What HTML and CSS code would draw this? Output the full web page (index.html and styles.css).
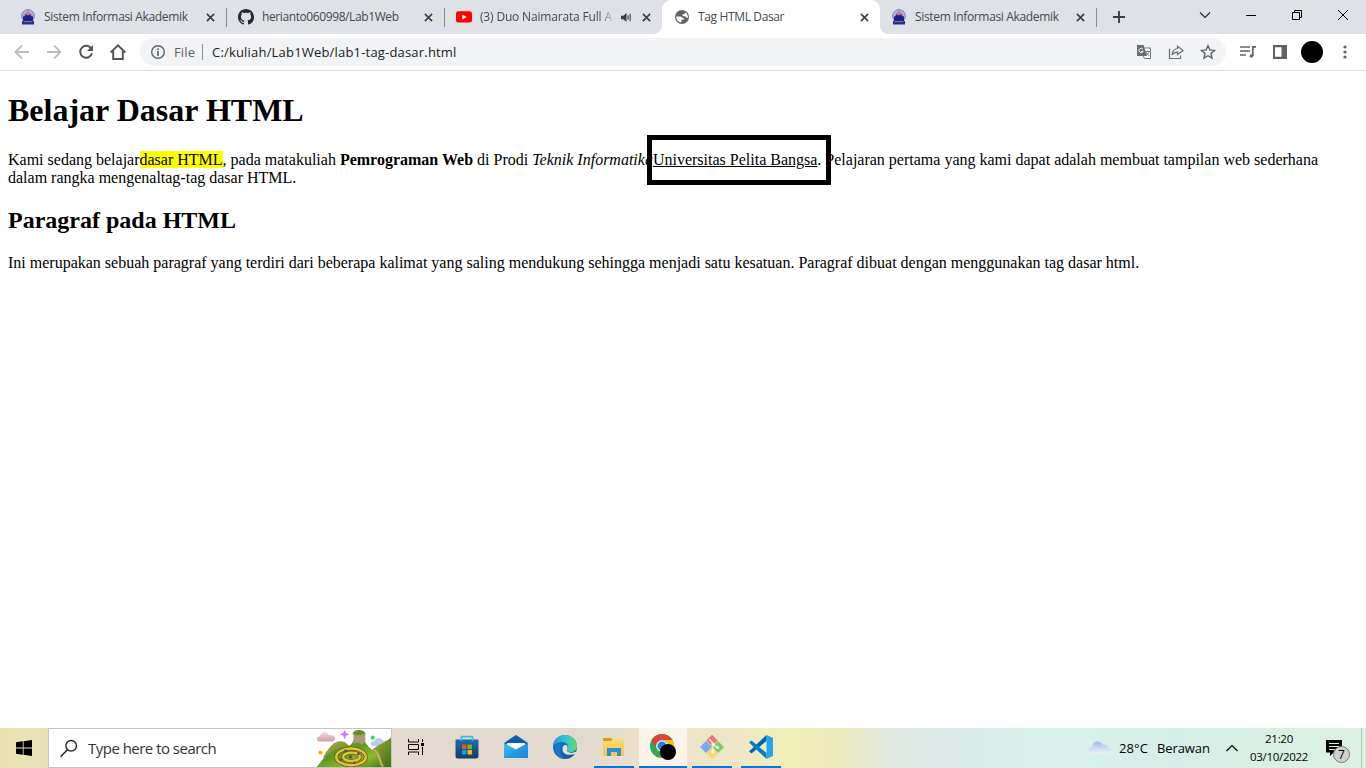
FILE: index.html
```html
<!DOCTYPE html>
<html lang="id">
<head>
<meta charset="utf-8">
<title>Tag HTML Dasar</title>
<link rel="stylesheet" href="styles.css">
</head>
<body>
<svg width="0" height="0" class="defs">
  <defs>
    <symbol id="campus" viewBox="0 0 16 16">
      <circle cx="8" cy="7" r="6.3" fill="#b9bbdf" stroke="#7174b5" stroke-width="1"/>
      <path d="M3.500 5.500 8 1.500l4.500 4v3h-9z" fill="#9497cb"/>
      <path d="M5 5.500h6v4H5z" fill="#30308a"/>
      <path d="M6.7 3.200h2.6v3H6.700z" fill="#ec6b60"/>
      <path d="M3 7.500l5-1 5 1v5H3z" fill="#20217f"/>
      <path d="M2 12h12v3.500H2z" fill="#2e2e84"/>
      <path d="M3.500 12.500h9" stroke="#9697c8" stroke-width=".7"/>
    </symbol>
    <symbol id="close" viewBox="0 0 10 10"><path d="M1 1l8 8M9 1L1 9" stroke="#3c4043" stroke-width="1.8" fill="none"/></symbol>
    <linearGradient id="blueV" x1="0" y1="0" x2="0" y2="1"><stop offset="0" stop-color="#1b6bb0"/><stop offset="1" stop-color="#173a68"/></linearGradient>
    <linearGradient id="mailG" x1="0" y1="0" x2="1" y2="1"><stop offset="0" stop-color="#38c2f5"/><stop offset="1" stop-color="#1687d9"/></linearGradient>
    <linearGradient id="edgeTop" x1="0" y1="0" x2="1" y2="0"><stop offset="0" stop-color="#209be0"/><stop offset=".55" stop-color="#35c6cf"/><stop offset="1" stop-color="#65dc63"/></linearGradient>
    <linearGradient id="edgeLow" x1="0" y1="0" x2="1" y2="1"><stop offset="0" stop-color="#1782d3"/><stop offset="1" stop-color="#0d4e9a"/></linearGradient>
    <linearGradient id="folderG" x1="0" y1="0" x2="0" y2="1"><stop offset="0" stop-color="#ffdc74"/><stop offset="1" stop-color="#f8c44a"/></linearGradient>
    <linearGradient id="cloudG" x1="0" y1="0" x2="0" y2="1"><stop offset="0" stop-color="#a9bbe6"/><stop offset="1" stop-color="#eff1fb"/></linearGradient>
    <linearGradient id="pinkG" x1="0" y1="0" x2="0" y2="1"><stop offset="0" stop-color="#efd8d9"/><stop offset="1" stop-color="#cf9fa4"/></linearGradient>
    <linearGradient id="hillG" x1="0" y1="0" x2="1" y2="1"><stop offset="0" stop-color="#8da33a"/><stop offset=".4" stop-color="#5f9526"/><stop offset=".7" stop-color="#8fbb2c"/><stop offset="1" stop-color="#3c7812"/></linearGradient>
    <linearGradient id="hillB" x1="0" y1="0" x2="1" y2="1"><stop offset="0" stop-color="#b8a258"/><stop offset=".4" stop-color="#839c30"/><stop offset="1" stop-color="#3d7012"/></linearGradient>
  </defs>
</svg>

<header class="tabstrip">
  <div class="tab first"><svg class="fav"><use href="#campus"/></svg><span class="title t-sia">Sistem Informasi Akademik</span><svg class="x"><use href="#close"/></svg></div>
  <div class="tab"><svg class="fav" viewBox="0 0 16 16"><path fill="#24292f" d="M8 0C3.58 0 0 3.58 0 8c0 3.54 2.29 6.53 5.47 7.59.4.07.55-.17.55-.38 0-.19-.01-.82-.01-1.49-2.01.37-2.53-.49-2.69-.94-.09-.23-.48-.94-.82-1.13-.28-.15-.68-.52-.01-.53.63-.01 1.08.58 1.23.82.72 1.21 1.87.87 2.33.66.07-.52.28-.87.51-1.07-1.78-.2-3.64-.89-3.64-3.95 0-.87.31-1.59.82-2.15-.08-.2-.36-1.02.08-2.12 0 0 .67-.21 2.2.82.64-.18 1.32-.27 2-.27s1.36.09 2 .27c1.53-1.04 2.2-.82 2.2-.82.44 1.1.16 1.92.08 2.12.51.56.82 1.27.82 2.15 0 3.07-1.87 3.75-3.65 3.95.29.25.54.73.54 1.48 0 1.07-.01 1.93-.01 2.2 0 .21.15.46.55.38A8.01 8.01 0 0 0 16 8c0-4.42-3.58-8-8-8z"/></svg><span class="title t-git">herianto060998/Lab1Web</span><svg class="x"><use href="#close"/></svg></div>
  <div class="tab"><svg class="fav" viewBox="0 0 16 16"><rect y="2.2" width="16" height="11.4" rx="2.4" fill="#f00"/><path d="M6.3 5.4v5L10.6 8z" fill="#fff"/></svg><span class="title t-yt fade">(3) Duo Naimarata Full Al</span><svg class="sound" viewBox="0 0 12 12"><path d="M0 4h2.500L6 1v10L2.500 8H0z" fill="#3c4043"/><path d="M7.700 3.500v5M10 2v8" stroke="#3c4043" stroke-width="1.200"/></svg><svg class="x"><use href="#close"/></svg></div>
  <div class="tab active"><svg class="fav" viewBox="0 0 16 16"><circle cx="8" cy="8" r="7" fill="#5f6368"/><path d="M2.200 7.500l4.300 0c1.500.1 1.800 1.800 3.200 1.700l.8 1.300-3 .3v2.500C4.500 13.400 2 11 2.200 7.500zM8.300 2.200l3.500 1-1 1.500-2.500.8.3 1.600 2.800.3 1.500 1.600 1.100-.4c0-3.200-2.500-6.200-5.700-6.400z" fill="#fff"/></svg><span class="title t-tag">Tag HTML Dasar</span><svg class="x"><use href="#close"/></svg></div>
  <div class="tab last"><svg class="fav"><use href="#campus"/></svg><span class="title t-sia">Sistem Informasi Akademik</span><svg class="x"><use href="#close"/></svg></div>
  <svg class="plus" viewBox="0 0 12 12"><path d="M6 0v12M0 6h12" stroke="#3c4043" stroke-width="1.900"/></svg>
  <div class="winctl">
    <svg viewBox="0 0 12 12"><path d="M1 3.500l5 5 5-5" fill="none" stroke="#222" stroke-width="1.100"/></svg>
    <svg viewBox="0 0 12 12"><path d="M1 6.500h10" stroke="#000"/></svg>
    <svg viewBox="0 0 12 12"><path d="M1.500 3.500h7v7h-7zM3.500 3.500v-2h7v7h-2" fill="none" stroke="#000"/></svg>
    <svg viewBox="0 0 12 12"><path d="M1 1l10 10M11 1L1 11" fill="none" stroke="#000"/></svg>
  </div>
</header>

<nav class="toolbar">
  <div class="navicons">
    <svg viewBox="0 0 16 16"><path d="M15 8H2M8 1.500L1.500 8 8 14.500" fill="none" stroke="#babcbe" stroke-width="1.800"/></svg>
    <svg viewBox="0 0 16 16"><path d="M1 8h13M8 1.500L14.500 8 8 14.500" fill="none" stroke="#babcbe" stroke-width="1.800"/></svg>
    <svg viewBox="0 0 16 16"><path d="M13.300 4.600A6 6 0 1 0 14 9.300" fill="none" stroke="#505458" stroke-width="2"/><path d="M15 1v6H9z" fill="#505458"/></svg>
    <svg viewBox="0 0 16 16"><path d="M.7 8.500L8 1.300l7.300 7.200M3.200 7v8h9.600V7" fill="none" stroke="#505458" stroke-width="1.900"/></svg>
  </div>
  <div class="omnibox">
    <svg class="info" viewBox="0 0 16 16"><circle cx="8" cy="8" r="6.300" fill="none" stroke="#5f6368" stroke-width="1.400"/><path d="M8 4.200v1.700M8 7.100v4.800" stroke="#5f6368" stroke-width="1.700"/></svg>
    <span class="file">File</span><i class="bar"></i><span class="url">C:/kuliah/Lab1Web/lab1-tag-dasar.html</span>
    <div class="omniicons">
      <svg viewBox="0 0 16 16"><path d="M7 4h7.500v10.500H8.500L7 11" fill="#fff" stroke="#777b80"/><path d="M1 1h6.500L11 12H1z" fill="#686c71"/><path d="M7 5.300a2.200 2.200 0 1 0 .2 2H5" fill="none" stroke="#f1f3f4"/><path d="M9 7.500h5M11.500 6.500v1M13 7.500c-.5 2-2 3.500-3 4M10 8c.5 1.500 2 3 3.500 3.500" fill="none" stroke="#777b80"/></svg>
      <svg viewBox="0 0 16 16"><path d="M1.500 4.500v10h11v-3" fill="none" stroke="#6b6f73" stroke-width="1.200"/><path d="M9.500 2.300L15 6.500l-5.500 4V8.200C6.500 8 5.200 9.200 4 11c.3-3.500 2-6 5.500-6.500z" fill="none" stroke="#6b6f73" stroke-width="1.200"/></svg>
      <svg viewBox="0 0 16 16"><path d="M8 1.700l1.900 4.200 4.600.5L11 9.500l1 4.600-4-2.400-4 2.400 1-4.600L1.500 6.400l4.600-.5z" fill="none" stroke="#5f6368" stroke-width="1.400"/></svg>
    </div>
  </div>
  <div class="toolright">
    <svg viewBox="0 0 16 16"><path d="M0 3h10M0 7h10M0 11h6M12.800 12V2.800H16" fill="none" stroke="#5f6368" stroke-width="1.700"/><circle cx="11.300" cy="12" r="1.800" fill="#5f6368"/></svg>
    <svg viewBox="0 0 16 16"><path d="M1 1h14v14H1zM3 3.200v9.600h6.500V3.200z" fill="#5f6368" fill-rule="evenodd"/></svg>
    <i class="avatar"></i>
    <svg viewBox="0 0 16 16"><circle cx="8" cy="3" r="1.600" fill="#5f6368"/><circle cx="8" cy="8" r="1.600" fill="#5f6368"/><circle cx="8" cy="13" r="1.600" fill="#5f6368"/></svg>
  </div>
</nav>

<main class="page">
  <h1>Belajar Dasar HTML</h1>
  <p>Kami sedang belajar<mark>dasar HTML</mark>, pada matakuliah <b>Pemrograman Web</b> di Prodi <i>Teknik Informatika</i><span class="marked"><u>Universitas Pelita Bangsa</u><span class="frame"></span></span>. Pelajaran pertama yang kami dapat adalah membuat tampilan web sederhana dalam rangka mengenaltag-tag dasar HTML.</p>
  <h2>Paragraf pada HTML</h2>
  <p>Ini merupakan sebuah paragraf yang terdiri dari beberapa kalimat yang saling mendukung sehingga menjadi satu kesatuan. Paragraf dibuat dengan menggunakan tag dasar html.</p>
</main>

<footer class="taskbar">
  <div class="start"><svg viewBox="0 0 16 16"><path d="M0 2.300l6.800-1v6.300H0zM7.600 1.200L16 0v7.600H7.600zM0 8.400h6.800v6.300L0 13.700zM7.600 8.400H16V16l-8.400-1.200z"/></svg></div>
  <div class="search">
    <svg class="lens" viewBox="0 0 16 16"><circle cx="10.500" cy="5.500" r="5" fill="none" stroke="#222" stroke-width="1.300"/><path d="M7 9.200L.5 15.700" stroke="#222" stroke-width="1.400"/></svg>
    <span class="hint">Type here to search</span>
    <svg class="hills" viewBox="0 0 76 39">
      <path d="M4 12.500c-5-1-3-5.500 0-5.500 1-5 8-5 9-1 6-1 9 5 4 6.500z" fill="url(#pinkG)"/>
      <path d="M29 .5l1.500 3.200L34 5l-3.500 1.500L29 10l-1.500-3.500L24 5l3.500-1.300z" fill="#dc78f4"/>
      <path d="M57 17c-3-2-1-5 2-5 2-5 8-3 9 0l5 2v4z" fill="#b1d3e0"/>
      <circle cx="57.500" cy="8.500" r="2.100" fill="#42cf70"/><circle cx="4.500" cy="23.500" r="2" fill="#ffa900"/>
      <path d="M8 27c7-12 13-17 21-14l12 10-12 14H6z" fill="url(#hillB)"/>
      <path d="M54 24C63 14 70 14 76 8v31H50z" fill="url(#hillB)"/>
      <path d="M0 39c10-12 14-18 24-20 10-1 12-3 14-8h11c1 4 5 8 13 14 5 4 5 9 7 14z" fill="url(#hillG)"/>
      <path d="M38 4c2-4 9-4 12 0v9l-4 3c-2-3-5-3-8-1z" fill="#a79b79"/><path d="M37 5c1-5 10-6 13-1l-5 2z" fill="#66921f"/>
      <g fill="none" stroke="#765d19" stroke-width="4"><ellipse cx="35.500" cy="28" rx="15" ry="8.500"/><ellipse cx="36" cy="28" rx="8.500" ry="4.300"/></g>
      <g fill="none" stroke="#dfca31" stroke-width="2.400"><ellipse cx="35.500" cy="28" rx="15" ry="8.500"/><ellipse cx="36" cy="28" rx="8.500" ry="4.300"/></g>
      <g fill="#4c5560"><circle cx="35" cy="28" r="1.700"/><circle cx="30" cy="22" r="1.400"/><circle cx="43" cy="25" r="1.400"/><circle cx="25" cy="31" r="1.400"/><circle cx="39" cy="34" r="1.400"/></g>
      <path d="M59 21c8 5 3 10 9 17" fill="none" stroke="#cfa777" stroke-width="2"/>
    </svg>
  </div>
  <div class="task taskview"><svg viewBox="0 0 16 16"><path d="M.500 0v3h10V0M.500 16v-3h10v3M.500 5.500h10v5H.500zM14.500 0v3M14.500 8v8" fill="none" stroke="#000"/><path d="M13 4h3v3h-3z"/></svg></div>
  <div class="task"><svg viewBox="0 0 24 24"><path d="M6.500 6V1.600h11V6" fill="none" stroke="#38bdea" stroke-width="1.700"/><path d="M.5 4.500h23V21q0 2.500-2.500 2.500H3Q.5 23.500.5 21z" fill="url(#blueV)"/><path d="M6.500 4.500V6M17.500 4.500V6" stroke="#38bdea" stroke-width="1.700"/><path d="M7 9.500h4.500V14H7z" fill="#f25022"/><path d="M12.500 9.500H17V14h-4.500z" fill="#7fba00"/><path d="M7 15h4.500v4.500H7z" fill="#00a4ef"/><path d="M12.500 15H17v4.500h-4.500z" fill="#ffb900"/></svg></div>
  <div class="task"><svg viewBox="0 0 24 24"><path d="M0 8L12 0l12 8v4H0z" fill="#0b5daf"/><path d="M3 8h18v6l-9 5-9-5z" fill="#fff"/><path d="M0 8l12 6.500L24 8v15H0z" fill="url(#mailG)"/><path d="M0 23l12-8.500L24 8v15z" fill="#248edb" opacity=".5"/></svg></div>
  <div class="task"><svg viewBox="0 0 24 24"><circle cx="12" cy="12" r="12" fill="url(#edgeLow)"/><path d="M0 12C0 5 5 0 12 0c8 0 12 6 12 11 0 4-3 6-6 6-3 0-5-1-4-3 3-4-1-7-5-7-5 0-9 3-9 5z" fill="url(#edgeTop)"/><path d="M14.500 11c-2-2-5-.5-5 3 0 5 5 7 12.500 5 2-2.500 1.500-2.500 0-2-3 1.700-9 .5-8-2.500z" fill="#e7e1d3"/><path d="M9 10c-4 4-2 12 5 14-8 .5-13-6-11-12 1-3 5-4 8-2z" fill="#1a75c4"/></svg></div>
  <div class="task open folder"><svg viewBox="0 0 24 24"><path d="M1 3h8l2 2v4H1z" fill="#d99d0d"/><path d="M1 6h8l2-2h11v17H1z" fill="url(#folderG)"/><path d="M5 13h14v8h-4v-4H9v4H5z" fill="#2d91d5"/></svg></div>
  <div class="task open current"><svg viewBox="0 0 26 26"><circle cx="12" cy="12" r="12" fill="#32a852"/><path d="M1.600 6A12 12 0 0 1 22.400 6H12a6 6 0 0 0-5.200 9z" fill="#de4338"/><path d="M22.400 6A12 12 0 0 1 12 24l5.200-9A6 6 0 0 0 12 6z" fill="#fbc116"/><circle cx="12" cy="12" r="5.800" fill="#fff"/><circle cx="12" cy="12" r="4.600" fill="#287de8"/><circle cx="18" cy="18" r="8" fill="#000"/></svg></div>
  <div class="task open"><svg viewBox="0 0 24 24"><path d="M12-.2l5.700 5.700L12 11.200 6.300 5.500z" fill="#f07272"/><path d="M6 6l6 6-6 6-6-6z" fill="#79a9f4"/><path d="M18 6l6 6-6 6-6-6z" fill="#78cc63"/><path d="M12 12.500l5.800 5.800L12 24l-5.800-5.700z" fill="#f5db6a"/><path d="M9 4l4 4v10M13 9l5 4" stroke="#fff4df" stroke-width="1.300" fill="none"/><circle cx="13" cy="9" r="1.700" fill="#fff4df"/><circle cx="13" cy="17" r="1.700" fill="#fff4df"/><circle cx="17.500" cy="12.500" r="1.700" fill="#fff4df"/></svg></div>
  <div class="task open vs"><svg viewBox="0 0 24 24"><path d="M17.500 0L24 3v18l-6.500 3z" fill="#25a5ee"/><path d="M17.500 0v6L2.500 18.500 0 16.500z" fill="#0065a9"/><path d="M0 7.500l2.500-2 15 12.500v6z" fill="#087dc5"/></svg></div>
  <div class="tray">
    <svg class="cloud" viewBox="0 0 22 14"><path d="M4 13c-5 0-5-7 0-7C5-1 13-1 15 4c4-1 5 2 5 3 4 1 3 6-1 6z" fill="url(#cloudG)"/></svg>
    <span class="temp">28°C</span><span class="sky">Berawan</span>
    <svg class="up" viewBox="0 0 12 8"><path d="M.5 7L6 1.500 11.500 7" fill="none" stroke="#000" stroke-width="1.200"/></svg>
    <div class="clock"><span class="time">21:20</span><span class="date">03/10/2022</span></div>
    <div class="notice"><svg viewBox="0 0 16 16"><path d="M0 0h16v12.500H7.500L4 16v-3.500H0z"/><path d="M3 3.500h10M3 6.500h10M3 9.500h6" stroke="#dcf1e3"/></svg><b>7</b></div>
  </div>
</footer>
</body>
</html>
```
FILE: styles.css
```css
* { box-sizing: border-box; }
body { margin: 0; width: 1366px; height: 768px; overflow: hidden; display: flex; flex-direction: column; background: #fff; font-family: "Open Sans", "Noto Sans", sans-serif; font-size: 12px; }
svg { display: block; flex: none; overflow: visible; }
.defs { position: absolute; }
.tabstrip { height: 34px; background: #dee1e6; display: flex; align-items: center; flex: none; }
.tab { width: 218px; height: 34px; display: flex; align-items: center; padding: 0 11px 0 11px; border-right: 1px solid transparent; color: #45494d; }
.tab:not(.active) { background: linear-gradient(#888c91, #888c91) right 8px / 1px 19px no-repeat; background-origin: border-box; }
.tab.first { width: 227px; padding-left: 20px; }
.tab:nth-child(3) { background: none; border: 0; width: 217px; }
.tab.active { background: #fff; border: 0; border-radius: 9px 9px 0 0; width: 218px; padding-left: 12px; position: relative; }
.tab.active::before, .tab.active::after { content: ""; position: absolute; bottom: 0; width: 8px; height: 8px; }
.tab.active::before { left: -8px; background: radial-gradient(circle at 0 0, transparent 7.5px, #fff 8px); }
.tab.active::after { right: -8px; background: radial-gradient(circle at 100% 0, transparent 7.5px, #fff 8px); }
.tab.last { width: 217px; }
.fav { width: 16px; height: 16px; margin-right: 8px; }
.x { width: 9px; height: 9px; margin-left: auto; }
.title { white-space: nowrap; line-height: 18px; }
.t-sia { letter-spacing: -.34px; }
.t-git { letter-spacing: -.4px; }
.t-yt { width: 132px; letter-spacing: -.17px; }
.t-tag { letter-spacing: -.36px; }
.fade { -webkit-mask-image: linear-gradient(90deg, #000 118px, transparent 136px); }
.sound { width: 11px; height: 11px; margin-left: 9px; }
.plus { width: 12px; height: 12px; margin-left: 16px; }
.winctl { margin: 0 17px 5px auto; display: flex; gap: 34px; }
.winctl svg { width: 12px; height: 12px; }
.toolbar { height: 37px; flex: none; display: flex; align-items: center; border-bottom: 1px solid #d8dadd; padding-left: 14px; }
.navicons { display: flex; gap: 16px; width: 126px; flex: none; }
.navicons svg { width: 16px; height: 16px; }
.omnibox { width: 1086px; height: 28px; flex: none; border-radius: 14px; background: #f1f3f4; display: flex; align-items: center; padding: 0 10px; font-size: 13px; }
.info { width: 16px; height: 16px; }
.file { color: #5f6368; margin-left: 8px; width: 28px; letter-spacing: .15px; }
.bar { width: 1px; height: 16px; background: #8c9094; }
.url { margin-left: 9px; color: #202124; letter-spacing: .19px; white-space: nowrap; }
.omniicons { margin-left: auto; display: flex; gap: 16px; }
.omniicons svg { width: 16px; height: 16px; }
.toolright { display: flex; align-items: center; flex: none; margin-left: 14px; }
.toolright svg { width: 16px; height: 16px; margin-right: 16px; }
.avatar { width: 22px; height: 22px; background: #000; border-radius: 50%; margin: 0 14px 0 -3px; }
.page { flex: 1; padding: 0 8px; font: 16px "Liberation Serif", "Times New Roman", serif; color: #000; }
.page h1 { font-size: 32px; margin: 21.44px 0; }
.page h2 { font-size: 24px; margin: 19.92px 0; }
.page p { margin: 16px 0; line-height: 18px; }
mark { background: #ff0; color: #000; }
.marked { position: relative; }
.frame { position: absolute; left: -6px; top: -16px; width: 184px; height: 50px; border: 5px solid #000; }
.taskbar { height: 40px; flex: none; display: flex; background: linear-gradient(90deg, #e9e3b3 0, #e9e2b9 48px, #e3d9cd 395px, #e3d9cf 580px, #eee3ca 660px, #efe6c8 730px, #efefb8 790px, #ece9bd 840px, #dfe9df 890px, #d9eae9 950px, #d8f1eb 1050px, #d5efe8 1180px, #dcf1e0 1366px); }
.start { width: 48px; display: grid; place-items: center; }
.start svg { width: 16px; height: 16px; }
.search { width: 344px; background: #fff; border: 1px solid #c4c4c4; display: flex; align-items: center; padding-left: 11px; overflow: hidden; }
.lens { width: 17px; height: 17px; }
.hint { margin-left: 11px; font-size: 15px; color: #333; letter-spacing: -.52px; white-space: nowrap; }
.hills { width: 75px; height: 39px; margin-left: auto; }
.task { width: 49px; display: grid; place-items: center; border-bottom: 2px solid transparent; }
.task svg { width: 24px; height: 24px; }
.taskview { width: 50px; padding-right: 2px; }
.taskview svg { width: 16px; height: 16px; }
.open { width: 40px; margin: 0 4px; border-color: #0078d7; }
.folder { margin-left: 5px; }
.current { width: 48px; margin: 0 1px; background: #faf4ea; }
.current svg { width: 26px; height: 26px; }
.vs { margin-left: 5px; }
.tray { flex: 1; display: flex; align-items: center; justify-content: flex-end; color: #000; padding-right: 18px; position: relative; font-size: 13px; }
.tray::after { content: ""; position: absolute; right: 4px; top: 0; width: 1px; height: 40px; background: #b0c1b8; }
.cloud { width: 22px; height: 14px; margin-right: 9px; }
.temp { width: 38px; white-space: nowrap; letter-spacing: .1px; }
.sky { width: 53px; white-space: nowrap; letter-spacing: -.1px; }
.up { width: 12px; height: 8px; margin: 0 12px 0 16px; }
.clock { width: 58px; display: flex; flex-direction: column; align-items: center; font-size: 11.5px; line-height: 18px; white-space: nowrap; letter-spacing: -.3px; }
.notice { position: relative; margin-left: 18px; width: 22px; height: 16px; }
.notice svg { width: 16px; height: 16px; }
.notice b { position: absolute; left: 7px; top: 6px; width: 17px; height: 17px; border: 1px solid #777; border-radius: 50%; background: #cfd3d0; font: 12px/15px "Open Sans", sans-serif; text-align: center; }
```
